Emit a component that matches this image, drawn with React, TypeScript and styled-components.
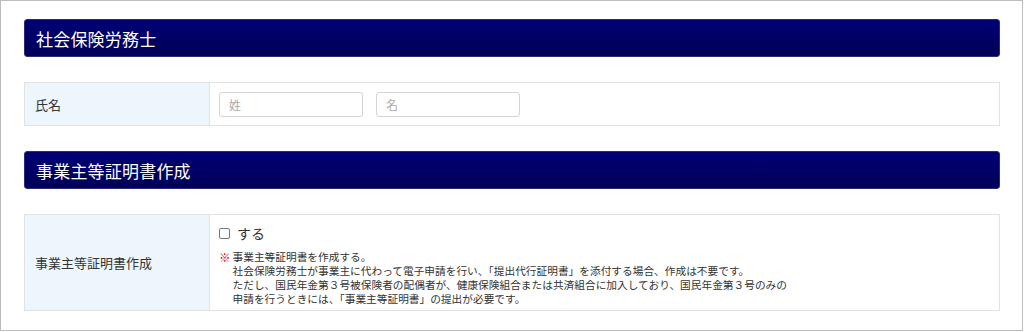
import React from "react";
import styled, { createGlobalStyle } from "styled-components";

const GlobalStyle = createGlobalStyle`
  html, body {
    margin: 0;
    padding: 0;
    background: #fff;
  }
  body {
    font-family: "Noto Sans CJK JP", "Noto Sans", sans-serif;
    color: #333;
  }
`;

const Frame = styled.div`
  box-sizing: border-box;
  width: 1023px;
  height: 331px;
  border: 1px solid #bcbcbc;
  padding: 18px 22px 0 23px;
  display: flex;
  flex-direction: column;
  gap: 25px;
`;

const SectionHeader = styled.h2`
  box-sizing: border-box;
  margin: 0;
  height: 38px;
  display: flex;
  align-items: center;
  padding: 0 11px;
  border: 1px solid #2a2a7a;
  border-radius: 3px;
  background: linear-gradient(#000074, #000058);
  color: #fff;
  font-size: 17px;
  font-weight: 400;
  letter-spacing: 0.2px;
`;

const FormTable = styled.div<{ $h: number }>`
  box-sizing: border-box;
  display: grid;
  grid-template-columns: 185px 1fr;
  border: 1px solid #e2e2e2;
  min-height: ${(p) => p.$h}px;
`;

const LabelCell = styled.div`
  display: flex;
  align-items: center;
  padding: 0 10px;
  background: #edf5fd;
  border-right: 1px solid #dde5ec;
  font-size: 13px;
  color: #333;
`;

const ValueCell = styled.div<{ $col?: boolean }>`
  display: flex;
  flex-direction: ${(p) => (p.$col ? "column" : "row")};
  align-items: ${(p) => (p.$col ? "flex-start" : "center")};
  gap: 13px;
  padding: 0 9px;
  background: #fff;
`;

const TextInput = styled.input`
  box-sizing: border-box;
  width: 144px;
  height: 25px;
  border: 1px solid #d4d4d4;
  border-radius: 3px;
  padding: 0 9px;
  font-family: inherit;
  font-size: 12px;
  color: #333;
  &::placeholder {
    color: #aaa;
  }
`;

const CheckRow = styled.label`
  display: flex;
  align-items: center;
  gap: 7px;
  margin-top: 9px;
  font-size: 14px;
  color: #333;
  line-height: 18px;
`;

const CheckBox = styled.span`
  box-sizing: border-box;
  width: 11px;
  height: 11px;
  border: 1px solid #777;
  border-radius: 2px;
  background: #fff;
`;

const Note = styled.div`
  display: flex;
  gap: 2px;
  margin-top: -5px;
  font-size: 10.7px;
  line-height: 14px;
  color: #333;
`;

const Mark = styled.span`
  color: #e60012;
  font-weight: 700;
  font-size: 11.5px;
`;

const NoteLines = styled.div`
  display: flex;
  flex-direction: column;
`;

export default function App() {
  return (
    <>
      <GlobalStyle />
      <Frame>
        <SectionHeader>社会保険労務士</SectionHeader>
        <FormTable $h={44}>
          <LabelCell>氏名</LabelCell>
          <ValueCell>
            <TextInput placeholder="姓" />
            <TextInput placeholder="名" />
          </ValueCell>
        </FormTable>
        <SectionHeader>事業主等証明書作成</SectionHeader>
        <FormTable $h={97}>
          <LabelCell>事業主等証明書作成</LabelCell>
          <ValueCell $col>
            <CheckRow>
              <CheckBox />
              する
            </CheckRow>
            <Note>
              <Mark>※</Mark>
              <NoteLines>
                <span>事業主等証明書を作成する。</span>
                <span>社会保険労務士が事業主に代わって電子申請を行い、「提出代行証明書」を添付する場合、作成は不要です。</span>
                <span>ただし、国民年金第３号被保険者の配偶者が、健康保険組合または共済組合に加入しており、国民年金第３号のみの</span>
                <span>申請を行うときには、「事業主等証明書」の提出が必要です。</span>
              </NoteLines>
            </Note>
          </ValueCell>
        </FormTable>
      </Frame>
    </>
  );
}
